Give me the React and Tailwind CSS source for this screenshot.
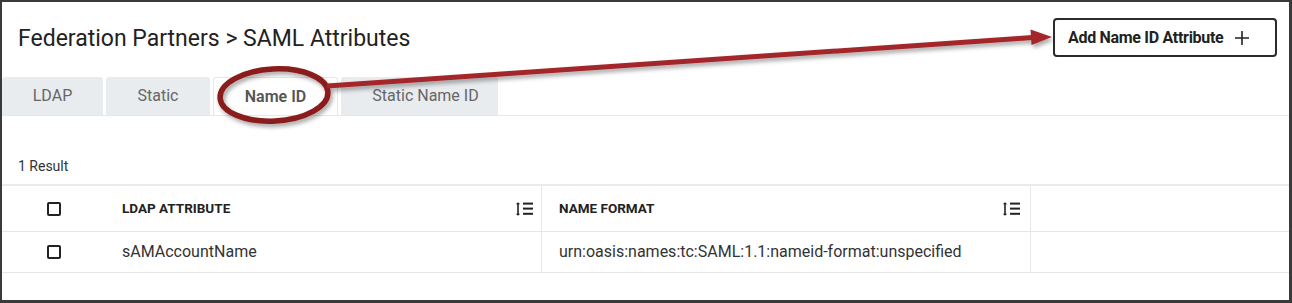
import React from "react";

const tabs = [
  { label: "LDAP", w: "w-[101px]" },
  { label: "Static", w: "w-[104px]" },
  { label: "Name ID", w: "w-[125px]", active: true },
  { label: "Static Name ID", w: "w-[157px] pl-[12px]" },
];

const SortIcon = () => (
  <svg width="18" height="14" viewBox="0 0 18 14" className="text-[#222]">
    <line x1="3" y1="1" x2="3" y2="13" stroke="currentColor" strokeWidth="1.6" />
    <path d="M0.8 2.2 L3 0.3 L5.2 2.2 Z" fill="currentColor" />
    <path d="M0.8 11.8 L3 13.7 L5.2 11.8 Z" fill="currentColor" />
    <rect x="8" y="0.6" width="10" height="2" fill="currentColor" />
    <rect x="8" y="5.6" width="10" height="2" fill="currentColor" />
    <rect x="8" y="10.8" width="10" height="2" fill="currentColor" />
  </svg>
);

const Checkbox = () => (
  <span className="block w-[14px] h-[14px] border-2 border-[#222] rounded-[2px] bg-white" />
);

// red callout drawn over the page
const Callout = () => (
  <svg
    className="absolute top-0 left-0 pointer-events-none"
    width="1292"
    height="303"
    viewBox="0 0 1292 303"
  >
    <defs>
      <filter id="shadow" x="-10%" y="-50%" width="120%" height="200%">
        <feDropShadow dx="2" dy="3" stdDeviation="2" floodColor="#000" floodOpacity="0.35" />
      </filter>
    </defs>
    <g filter="url(#shadow)">
      <ellipse
        cx="274"
        cy="95"
        rx="54"
        ry="26"
        fill="none"
        stroke="#8a1b1f"
        strokeWidth="5.5"
        transform="rotate(-3 274 95)"
      />
      <line x1="327" y1="86" x2="1033" y2="37.6" stroke="#a2282b" strokeWidth="5" />
      <polygon points="1052,37 1030.5,29.5 1031.5,45" fill="#a2282b" />
    </g>
  </svg>
);

export default function App() {
  return (
    <div className="relative w-[1292px] h-[303px] overflow-hidden font-['Roboto',sans-serif]">
      <div className="w-full h-full bg-white border-t-2 border-l-2 border-r-[3px] border-b-[3px] border-[#3a3a3a] flex flex-col">
        {/* header */}
        <div className="flex items-center justify-between pl-4 pr-3 pt-4">
          <h1 className="text-[23px] leading-7 text-[#222] mt-[2px]">
            Federation Partners &gt; SAML Attributes
          </h1>
          <button className="h-[39px] w-[224px] flex items-center pl-[13px] gap-[12px] border-2 border-[#2b2b2b] rounded-[4px] bg-white text-[16px] font-bold text-[#222] tracking-[-0.3px]">
            Add Name ID Attribute
            <svg width="14" height="14" viewBox="0 0 14 14">
              <path d="M7 0V14M0 7H14" stroke="#222" strokeWidth="1.6" />
            </svg>
          </button>
        </div>

        {/* tabs */}
        <div className="mt-5 flex gap-[3px] border-b border-[#e5e7eb]">
          {tabs.map((t) => (
            <div
              key={t.label}
              className={
                t.active
                  ? `${t.w} h-[38px] flex items-center justify-center rounded-t-[3px] bg-white border border-b-0 border-[#e5e7eb] text-[16px] font-semibold text-[#555]`
                  : `${t.w} h-[38px] flex items-center justify-center rounded-t-[3px] bg-[#e9ecef] text-[16px] text-[#666]`
              }
            >
              {t.label}
            </div>
          ))}
        </div>

        <div className="pl-4 mt-[42px] text-[14px] leading-4 text-[#333]">1 Result</div>

        {/* table */}
        <div className="mt-[10px] border-t-2 border-[#e9ecef]">
          <div className="flex h-[46px] border-b border-[#e5e7eb] text-[13.5px] font-bold text-[#222] uppercase">
            <div className="w-[104px] flex items-center justify-center">
              <Checkbox />
            </div>
            <div className="w-[436px] flex items-center justify-between pl-4 pr-[8px] border-r border-[#e5e7eb]">
              <span>LDAP Attribute</span>
              <SortIcon />
            </div>
            <div className="w-[489px] flex items-center justify-between pl-[17px] pr-[10px] border-r border-[#e5e7eb]">
              <span>Name Format</span>
              <SortIcon />
            </div>
            <div className="flex-1" />
          </div>
          <div className="flex h-[41px] border-b border-[#e5e7eb] text-[16px] text-[#333]">
            <div className="w-[104px] flex items-center justify-center">
              <Checkbox />
            </div>
            <div className="w-[436px] flex items-center pl-4 border-r border-[#e5e7eb]">
              sAMAccountName
            </div>
            <div className="w-[489px] flex items-center pl-[17px] border-r border-[#e5e7eb]">
              urn:oasis:names:tc:SAML:1.1:nameid-format:unspecified
            </div>
            <div className="flex-1" />
          </div>
        </div>
      </div>
      <Callout />
    </div>
  );
}
